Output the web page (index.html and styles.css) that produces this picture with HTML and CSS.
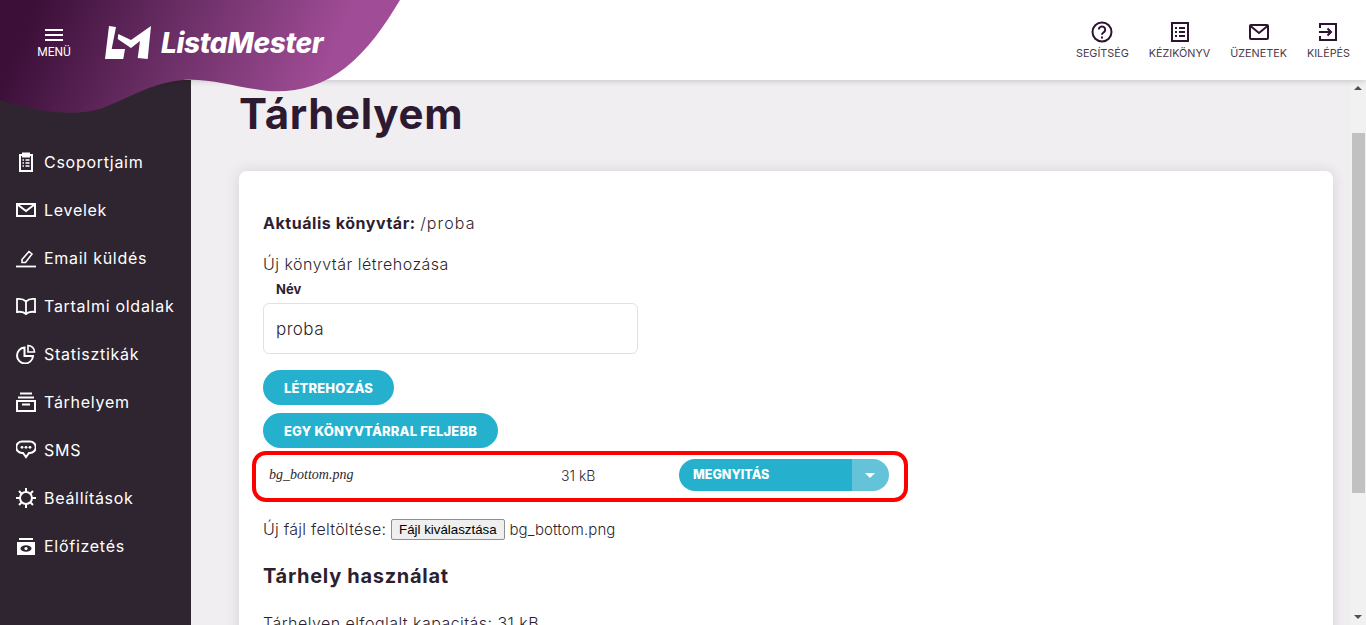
FILE: index.html
```html
<!DOCTYPE html>
<html lang="hu">
<head>
  <meta charset="UTF-8">
  <meta name="viewport" content="width=device-width,initial-scale=1">
  <title>ListaMester</title>
  <link rel="stylesheet" href="styles.css">
</head>
<body>
  <!-- Top bar -->
  <header class="topbar">
    <svg class="wave" width="400" height="115" viewBox="0 0 400 115">
      <defs>
        <linearGradient id="waveGrad" x1="30" y1="15" x2="300" y2="130" gradientUnits="userSpaceOnUse">
          <stop offset="0" stop-color="#3b0f38"/>
          <stop offset="0.5" stop-color="#6d3068"/>
          <stop offset="1" stop-color="#a04c96"/>
        </linearGradient>
      </defs>
      <path d="M0 0H400C385 25 368 50 345 68C322 86 295 93 268 91C240 88 210 78 183 80C150 83 125 100 100 109C75 116 40 113 0 100Z" fill="url(#waveGrad)"/>
    </svg>
    <button class="menu-btn">
      <span class="burger"></span>
      <span>MENÜ</span>
    </button>
    <a class="logo">
      <svg width="47" height="34" viewBox="0 0 47 34"><path d="M4 0L11 1L6.7 23H20L18.3 33H0Z M13.3 8L26 14L46 0L42.7 33L32.7 32L35 15L26 22L12.7 13Z" fill="#fff"/></svg>
      <span class="logo-text">ListaMester</span>
    </a>
    <nav class="top-links">
      <a class="top-link">
        <svg width="22" height="22" viewBox="0 0 22 22" fill="none" stroke="#2e1430" stroke-width="2"><circle cx="11" cy="11" r="9.5"/><path d="M7.8 8.6a3.2 3.2 0 1 1 4.8 2.8c-1 .6-1.6 1.2-1.6 2.4"/><path d="M11 15.6v2"/></svg>
        <span>SEGÍTSÉG</span>
      </a>
      <a class="top-link">
        <svg width="22" height="22" viewBox="0 0 22 22" fill="none" stroke="#2e1430" stroke-width="2"><rect x="3" y="2" width="16" height="18"/><path d="M6 7h2M10 7h6M6 11h2M10 11h6M6 15h2M10 15h6"/></svg>
        <span>KÉZIKÖNYV</span>
      </a>
      <a class="top-link">
        <svg width="22" height="22" viewBox="0 0 22 22" fill="none" stroke="#2e1430" stroke-width="2"><rect x="2" y="4" width="18" height="14" rx="1"/><path d="M2.5 5L11 12L19.5 5"/></svg>
        <span>ÜZENETEK</span>
      </a>
      <a class="top-link">
        <svg width="22" height="22" viewBox="0 0 22 22" fill="none" stroke="#2e1430" stroke-width="2"><path d="M3 7V3H19V19H3V15"/><path d="M2 11H14M10.5 7.5L14 11L10.5 14.5"/></svg>
        <span>KILÉPÉS</span>
      </a>
    </nav>
  </header>

  <div class="layout">
    <!-- Side menu -->
    <aside class="sidebar">
      <a class="side-item"><svg width="20" height="20" viewBox="0 0 20 20" fill="none" stroke="#fff" stroke-width="2"><rect x="4" y="3" width="12" height="16"/><path d="M7 1.5h6v3H7z" fill="#fff"/><path d="M6.5 8h1.5M9.5 8h4M6.5 11h1.5M9.5 11h4M6.5 14h1.5M9.5 14h4" stroke-width="1.5"/></svg>Csoportjaim</a>
      <a class="side-item"><svg width="20" height="20" viewBox="0 0 20 20" fill="none" stroke="#fff" stroke-width="2"><rect x="1" y="4" width="18" height="12"/><path d="M1.5 4.5L10 11L18.5 4.5"/></svg>Levelek</a>
      <a class="side-item"><svg width="20" height="20" viewBox="0 0 20 20" fill="none" stroke="#fff" stroke-width="1.6"><path d="M6 14.5V11.5L13 3.5L16 6L9.5 14.5Z"/><path d="M0 18.5H20" stroke-width="1.8"/></svg>Email küldés</a>
      <a class="side-item"><svg width="20" height="20" viewBox="0 0 20 20" fill="none" stroke="#fff" stroke-width="1.8"><path d="M10 5.5C8 3.5 4 2.5 1 3V16C4 15.5 8 16 10 18C12 16 16 15.5 19 16V3C16 2.5 12 3.5 10 5.5Z"/><path d="M10 5.5V18"/></svg>Tartalmi oldalak</a>
      <a class="side-item"><svg width="20" height="20" viewBox="0 0 20 20" fill="none" stroke="#fff" stroke-width="2"><path d="M8.5 3.5A8 8 0 1 0 17 12H8.5Z"/><path d="M12 1.5A6.5 6.5 0 0 1 18.5 8H12Z" stroke-width="1.6"/></svg>Statisztikák</a>
      <a class="side-item"><svg width="20" height="20" viewBox="0 0 20 20" fill="none" stroke="#fff" stroke-width="2"><path d="M4 1.5H16M2 5.5H18"/><rect x="1" y="9" width="18" height="10"/><path d="M6 12.5H14"/></svg>Tárhelyem</a>
      <a class="side-item"><svg width="20" height="20" viewBox="0 0 20 20" fill="none" stroke="#fff" stroke-width="2"><path d="M6 1.5H14A5.5 5.5 0 0 1 14 13H13L10 17L7 13H6A5.5 5.5 0 0 1 6 1.5Z"/><circle cx="6" cy="7.3" r="1.4" fill="#fff" stroke="none"/><circle cx="10" cy="7.3" r="1.4" fill="#fff" stroke="none"/><circle cx="14" cy="7.3" r="1.4" fill="#fff" stroke="none"/></svg>SMS</a>
      <a class="side-item"><svg width="20" height="20" viewBox="0 0 20 20" fill="none" stroke="#fff" stroke-width="2"><circle cx="10" cy="10" r="6"/><path d="M10 0V4M10 16V20M0 10H4M16 10H20M3 3L5.5 5.5M14.5 14.5L17 17M17 3L14.5 5.5M5.5 14.5L3 17"/></svg>Beállítások</a>
      <a class="side-item"><svg width="20" height="20" viewBox="0 0 20 20" fill="none"><path d="M3 3H17" stroke="#fff" stroke-width="2"/><rect x="1" y="6" width="18" height="13" fill="#fff"/><ellipse cx="10" cy="12.5" rx="5.5" ry="3.2" fill="#2f2530"/><circle cx="10" cy="12.5" r="1.6" fill="#fff"/></svg>Előfizetés</a>
    </aside>

    <!-- Page content -->
    <main class="content">
      <h1 class="page-title">Tárhelyem</h1>
      <section class="card">
        <p class="current-dir"><b>Aktuális könyvtár:</b> <span class="dir-path">/proba</span></p>
        <p class="new-dir">Új könyvtár létrehozása</p>
        <label class="field-label">Név</label>
        <input class="field" type="text" value="proba">
        <button class="pill">LÉTREHOZÁS</button>
        <button class="pill">EGY KÖNYVTÁRRAL FELJEBB</button>

        <div class="file-row">
          <span class="file-name">bg_bottom.png</span>
          <span class="file-size">31 kB</span>
          <div class="split-btn">
            <span class="split-main">MEGNYITÁS</span>
            <span class="split-arrow"><i></i></span>
          </div>
        </div>

        <div class="upload">Új fájl feltöltése: <span class="file-btn">Fájl kiválasztása</span> <span class="file-chosen">bg_bottom.png</span></div>

        <h2 class="usage-title">Tárhely használat</h2>
        <p class="usage-line">Tárhelyen elfoglalt kapacitás: 31 kB</p>
      </section>
    </main>

    <div class="scrollbar">
      <span class="arrow-up"></span>
      <span class="thumb"></span>
      <span class="arrow-down"></span>
    </div>
  </div>
</body>
</html>
```

FILE: styles.css
```css
html,body{height:100%;}
body{
  margin:0;overflow:hidden;
  font-family:Inter,"Liberation Sans",sans-serif;
  background:#f1eef2;color:#2e1f30;
  display:flex;flex-direction:column;
}
p{margin:0;}

.topbar{
  flex:0 0 80px;
  background:white;
  display:flex;align-items:center;
  box-shadow:0 1px 6px rgba(0,0,0,.18);
  position:relative;z-index:2;
}
.wave{position:absolute;left:0;top:0;}
.menu-btn{
  position:relative;
  margin-left:37px;width:34px;padding:0;
  background:none;border:none;color:white;
  font:12px Roboto,sans-serif;
  display:flex;flex-direction:column;align-items:center;gap:4px;
  margin-top:7px;
}
.burger{
  width:18px;height:12px;
  border-top:2px solid white;border-bottom:2px solid white;
  position:relative;box-sizing:border-box;
}
.burger:after{
  content:"";position:absolute;left:0;right:0;top:3px;height:2px;background:white;
}
.logo{
  position:relative;
  display:flex;align-items:center;gap:9px;
  margin-left:34px;margin-top:5px;
}
.logo-text{
  color:white;font:italic 800 28px Inter,sans-serif;letter-spacing:-.35px;
}
.top-links{
  margin-left:auto;margin-right:16px;
  display:flex;gap:20px;
}
.top-link{
  display:flex;flex-direction:column;align-items:center;gap:4px;
  font-size:10.8px;color:#4a3a4c;
}

.layout{flex:1;display:flex;min-height:0;}
.sidebar{
  flex:0 0 191px;
  background:#2f2530;
  box-sizing:border-box;
  padding-top:58px;
}
.side-item{
  height:48px;
  display:flex;align-items:center;gap:8px;
  padding-left:16px;
  color:white;font-size:16px;letter-spacing:.72px;
}
.content{
  flex:1;min-width:0;
  padding:0 17px 0 48px;
  overflow:hidden;
}
.page-title{
  margin:9px 0 32px;
  font-size:42px;line-height:50px;font-weight:700;letter-spacing:.7px;color:#2e1a30;
}
.card{
  background:white;border-radius:8px;
  box-shadow:0 0 14px rgba(60,40,60,.14);
  padding:40px 24px 0;
  height:500px;
}
.current-dir{font-size:16px;line-height:24px;font-weight:300;}
.current-dir b{font-weight:700;letter-spacing:.55px;}
.dir-path{letter-spacing:1.1px;}
.new-dir{margin-top:17px;font-size:16px;line-height:24px;font-weight:300;letter-spacing:.5px;}
.field-label{
  display:block;margin:4px 0 5px 13px;
  font-size:13px;line-height:18px;font-weight:700;
}
.field{
  display:block;box-sizing:border-box;
  width:375px;height:51px;
  padding:0 12px;
  border:1px solid #e3e1e4;border-radius:6px;
  font:300 17px Inter,sans-serif;letter-spacing:.4px;color:#2e1f30;
  margin-bottom:16px;
}
.pill{
  display:block;height:35px;
  padding:0 21px;margin-bottom:8px;
  background:#25b1cd;border:none;border-radius:18px;
  color:white;font:800 13px Inter,sans-serif;letter-spacing:.15px;
}
.file-row{
  width:648px;height:40px;
  margin:-5px 0 0 -11px;
  padding-bottom:3px;
  border:4px solid #f00;border-radius:14px;
  display:flex;align-items:center;
  box-sizing:content-box;
}
.file-name{
  width:292px;padding-left:13px;
  font:italic 14px "Liberation Serif",serif;
}
.file-size{width:118px;font-size:14px;font-weight:300;}
.split-btn{display:flex;height:32px;border-radius:16px;overflow:hidden;width:210px;}
.split-main{
  flex:1;background:#25b1cd;color:white;
  font:800 12.5px/32px Inter,sans-serif;padding-left:14px;
}
.split-arrow{
  width:37px;background:#64c3d8;
  display:flex;align-items:center;justify-content:center;
}
.split-arrow i{
  width:0;height:0;margin-right:2px;
  border-left:5px solid transparent;border-right:5px solid transparent;border-top:5px solid white;
}
.upload{margin-top:15px;font-size:16px;font-weight:300;line-height:24px;letter-spacing:.25px;}
.file-btn{
  display:inline-block;height:21px;box-sizing:border-box;
  padding:0 7px;vertical-align:1px;letter-spacing:0;
  background:#efefef;border:1px solid #8f8f8f;border-radius:2px;
  font:13.3px/19px "Liberation Sans",sans-serif;color:black;
}
.file-chosen{font-size:15px;letter-spacing:.1px;}
.usage-title{margin:19px 0 0;font-size:20px;line-height:30px;font-weight:700;letter-spacing:.7px;}
.usage-line{margin-top:20px;font-size:16px;font-weight:300;line-height:24px;letter-spacing:.45px;}

.scrollbar{
  flex:0 0 16px;background:#f1f1f1;
  display:flex;flex-direction:column;align-items:center;position:relative;
}
.arrow-up{
  width:0;height:0;margin-top:6px;
  border-left:4px solid transparent;border-right:4px solid transparent;border-bottom:4px solid #505050;
}
.thumb{width:13px;height:360px;background:#c1c1c1;margin-top:43px;}
.arrow-down{
  width:0;height:0;margin-top:auto;margin-bottom:6px;
  border-left:4px solid transparent;border-right:4px solid transparent;border-top:4px solid #505050;
}
```
